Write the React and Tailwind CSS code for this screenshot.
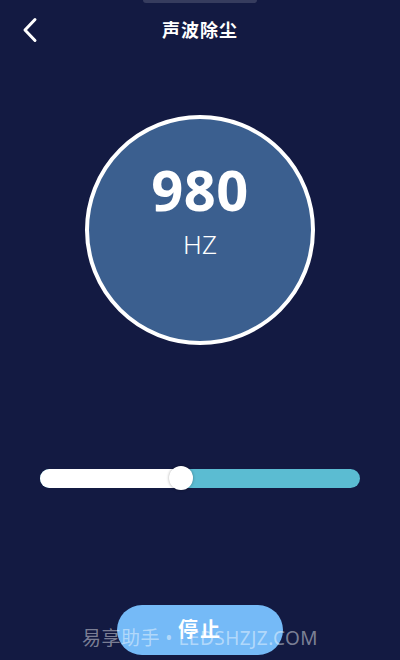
import React, { useState } from 'react';

const App = () => {
  const [value] = useState(980);
  const percent = 44; // thumb position along the track

  return (
    <div
      className="relative w-[400px] h-[660px] overflow-hidden bg-[#131a42] flex flex-col items-center"
      style={{ fontFamily: '"Noto Sans", "Noto Sans CJK SC", sans-serif' }}
    >
      {/* top notch strip */}
      <div className="w-[114px] h-[3px] rounded-b bg-white/15" />

      {/* header */}
      <div className="relative w-full h-[54px] flex items-center justify-center">
        <button className="absolute left-[22px] top-[14px] p-0">
          <svg width="16" height="26" viewBox="0 0 16 26" fill="none">
            <path d="M13 2.5 L3 13 L13 23.5" stroke="white" strokeWidth="3" strokeLinecap="round" strokeLinejoin="round" />
          </svg>
        </button>
        <h1 className="text-white text-[18px] font-bold tracking-[1px]">声波除尘</h1>
      </div>

      {/* frequency dial */}
      <div className="mt-[58px] w-[230px] h-[230px] rounded-full border-[4px] border-white bg-[#3b5f8f] flex flex-col items-center">
        <div className="mt-[42px] text-white text-[56px] font-bold leading-none tracking-[0.5px]">{value}</div>
        <div className="mt-[14px] text-white text-[26px] font-light leading-none">HZ</div>
      </div>

      {/* slider */}
      <div className="relative mt-[121px] w-[320px] h-[24px] flex items-center">
        <div className="w-full h-[19px] rounded-full bg-[#5bbcd2] overflow-hidden flex">
          <div className="h-full bg-white" style={{ width: `${percent}%` }} />
        </div>
        <div
          className="absolute top-0 w-[24px] h-[24px] -ml-[12px] rounded-full bg-white shadow-[0_0_3px_rgba(0,0,0,0.35)]"
          style={{ left: `${percent}%` }}
        />
      </div>

      {/* stop button */}
      <button className="mt-[115px] w-[166px] h-[50px] rounded-full bg-[#75baf7] text-white text-[20px] font-bold tracking-[2px]">
        停止
      </button>

      {/* watermark */}
      <div className="absolute left-0 right-0 top-[624px] flex justify-center pointer-events-none">
        <span className="text-[19px] text-white/45 tracking-[0.5px]">易享助手 • LEDSHZJZ.COM</span>
      </div>
    </div>
  );
};

export default App;
